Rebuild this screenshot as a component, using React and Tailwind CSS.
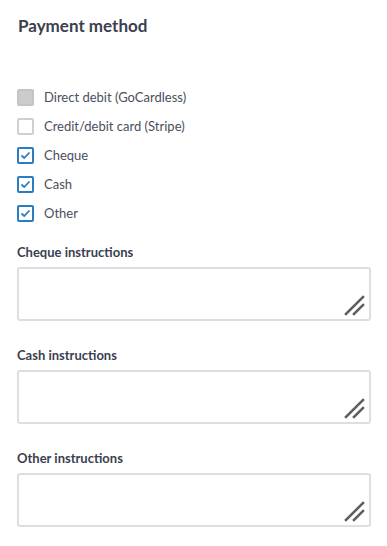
import React from 'react';

const Check = ({ state }) => {
  if (state === 'disabled') {
    return <span className="w-[17px] h-[17px] rounded-[2px] border-2 border-[#c4c4c4] bg-[#cccccc] shrink-0" />;
  }
  if (state === 'off') {
    return <span className="w-[17px] h-[17px] rounded-[2px] border-2 border-[#cfcfcf] bg-white shrink-0" />;
  }
  return (
    <span className="w-[17px] h-[17px] rounded-[2px] border-2 border-[#2a7dc0] bg-white shrink-0 flex items-center justify-center">
      <svg width="11" height="9" viewBox="0 0 11 9" fill="none">
        <path d="M1.5 4.5 L4.2 7 L9.5 1.5" stroke="#2a7dc0" strokeWidth="1.8" />
      </svg>
    </span>
  );
};

const Option = ({ state, label }) => (
  <label className="flex items-center gap-[10px] h-[29px]">
    <Check state={state} />
    <span className="text-[13px] text-[#4a4f5c]">{label}</span>
  </label>
);

const Instructions = ({ label }) => (
  <div className="mb-[24px]">
    <div className="text-[13px] font-bold text-[#3b4050] mb-[6px] leading-[18px] pt-[1px]">{label}</div>
    <div className="relative w-[354px] h-[54px]">
      <textarea className="w-full h-full border-2 border-[#dedee2] rounded-[3px] resize-none outline-none" />
      <svg className="absolute right-[6px] bottom-[5px]" width="21" height="21" viewBox="0 0 21 21">
        <path d="M2 19 L19 2" stroke="#5f5f5f" strokeWidth="2.6" strokeLinecap="square" />
        <path d="M10 19 L19 10" stroke="#5f5f5f" strokeWidth="2.6" strokeLinecap="square" />
      </svg>
    </div>
  </div>
);

export default function App() {
  return (
    <div className="min-h-screen bg-white pl-[17px] pt-[14px]" style={{ fontFamily: 'Lato, "Noto Sans", sans-serif' }}>
      <h2 className="text-[17px] font-bold text-[#3b4050] leading-[24px] pl-[1px]">Payment method</h2>
      <div className="mt-[45px] mb-[14px]">
        <Option state="disabled" label="Direct debit (GoCardless)" />
        <Option state="off" label="Credit/debit card (Stripe)" />
        <Option state="on" label="Cheque" />
        <Option state="on" label="Cash" />
        <Option state="on" label="Other" />
      </div>
      <Instructions label="Cheque instructions" />
      <Instructions label="Cash instructions" />
      <Instructions label="Other instructions" />
    </div>
  );
}
